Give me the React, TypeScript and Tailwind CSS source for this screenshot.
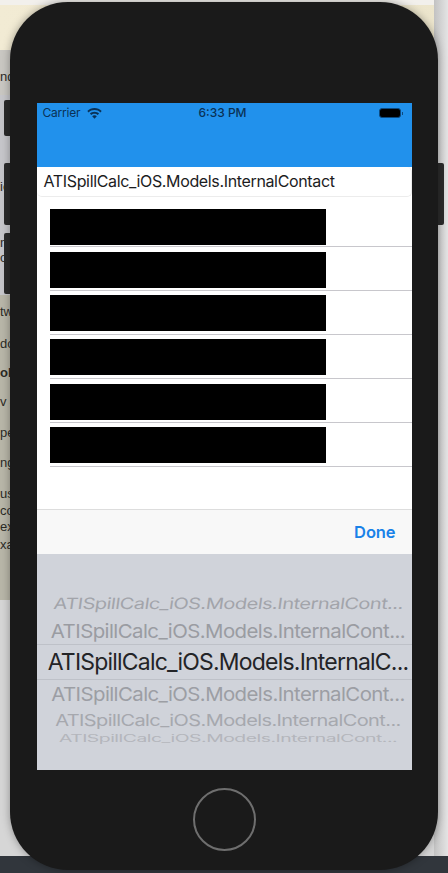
import React from 'react'

const rowLabel = 'ATISpillCalc_iOS.Models.InternalContact'
const wheelLabel = 'ATISpillCalc_iOS.Models.InternalCont...'

const contactRows = ['pt-[6px]', 'pt-[5px]', 'pt-[4px]', 'pt-[4px]', 'pt-[5px]', 'pt-[4px]']

const BackdropText = () => {
  return (
    <div className="w-[20px] overflow-hidden whitespace-nowrap text-[13px] leading-4 text-[#2c2b26] font-['Liberation_Sans',sans-serif]">
      <div className="h-[69px]"></div>
      <div className="h-[110px]">nd</div>
      <div className="h-[56px]">ic</div>
      <div className="h-[15px]">n</div>
      <div className="h-[54px]">oc</div>
      <div className="h-[32px]">tw</div>
      <div className="h-[29px]">do</div>
      <div className="h-[29px] font-bold">olc</div>
      <div className="h-[31px]">v 4</div>
      <div className="h-[30px]">pe</div>
      <div className="h-[31px]">ng</div>
      <div className="h-[17px]">us</div>
      <div className="h-[16px]">co</div>
      <div className="h-[18px]">ex</div>
      <div className="h-[16px]">xa</div>
    </div>
  )
}

const WifiIcon = () => {
  return (
    <svg width="15" height="11" viewBox="0 0 15 11" className="text-[#0a3156]">
      <path d="M7.5 0C4.7 0 2.2 1.1.3 2.9l1.4 1.5C3.2 2.9 5.2 2.1 7.5 2.1s4.3.8 5.8 2.3l1.4-1.5C12.8 1.1 10.3 0 7.5 0z" fill="currentColor" />
      <path d="M7.5 3.7c-1.8 0-3.4.7-4.6 1.9l1.4 1.5c.8-.8 2-1.3 3.2-1.3s2.4.5 3.2 1.3l1.4-1.5C10.9 4.4 9.3 3.7 7.5 3.7z" fill="currentColor" />
      <path d="M7.5 7.3c-.9 0-1.7.4-2.3 1l2.3 2.5 2.3-2.5c-.6-.6-1.4-1-2.3-1z" fill="currentColor" />
    </svg>
  )
}

const SideButton = ({ className }: { className: string }) => {
  return <div className={`absolute w-[8px] rounded-[2px] bg-[#2b2b2b] ${className}`}></div>
}

const Screen = () => {
  return (
    <div className="flex h-[667px] w-[375px] flex-col bg-white font-['Inter',sans-serif]">
      <div className="h-[64px] bg-[#2191ec]">
        <div className="flex h-[20px] items-center justify-between pl-[6px] pr-[1px] text-[12px] text-[#0a3156]">
          <div className="flex w-[120px] items-center gap-[7px] tracking-[-0.2px]">
            <span>Carrier</span>
            <WifiIcon />
          </div>
          <span className="font-medium">6:33 PM</span>
          <div className="mr-[8px] flex w-[120px] items-center justify-end gap-[1px]">
            <div className="h-[10px] w-[22px] rounded-[3px] border border-[#0d4a80] bg-black"></div>
            <div className="h-[3px] w-[1px] bg-[#0d4a80]"></div>
          </div>
        </div>
      </div>

      <div className="flex h-[30px] items-center rounded-[5px] border-b border-r border-[#ececec] pb-[1px] pl-[7px] text-[16px] tracking-[-0.35px] text-[#1c1c1e]">
        {rowLabel}
      </div>

      <div className="ml-[13px] mt-[6px] flex flex-col">
        {contactRows.map((pad, i) => (
          <div key={i} className={`h-[44px] border-b border-[#c8c7cc] ${pad}`}>
            <div className="h-[36px] w-[276px] bg-black"></div>
          </div>
        ))}
      </div>

      <div className="mt-[42px] flex h-[45px] items-center justify-end border-t border-[#dddddd] bg-[#f8f8f8] pr-[16px] text-[16.5px] font-semibold tracking-[-0.1px] text-[#1a82e8]">
        Done
      </div>

      <div className="flex h-[216px] flex-col overflow-hidden bg-[#d0d3da] pt-[36px] whitespace-nowrap">
        <div className="flex h-[28px] items-center justify-center pl-[8px] text-[20px] tracking-[-0.5px] text-[#a2a4aa] scale-y-[0.78] -skew-x-6">{wheelLabel}</div>
        <div className="flex h-[26px] items-center justify-center pl-[8px] text-[20.4px] tracking-[-0.56px] text-[#9a9ca2] scale-y-[0.93]">{wheelLabel}</div>
        <div className="flex h-[36px] items-center justify-center border-y border-[#bec1c8] pl-[8px] text-[23px] tracking-[-0.8px] text-[#232427]">ATISpillCalc_iOS.Models.InternalC...</div>
        <div className="flex h-[28px] items-center justify-center pl-[8px] text-[20.4px] tracking-[-0.58px] text-[#9c9ea4] scale-y-[0.93]">{wheelLabel}</div>
        <div className="flex h-[26px] items-center justify-center pl-[8px] text-[20px] tracking-[-0.6px] text-[#a6a8ae] scale-y-[0.78]">{wheelLabel}</div>
        <div className="flex h-[10px] items-center justify-center pl-[8px] text-[19.4px] tracking-[-0.5px] text-[#b4b6bc] scale-y-[0.5]">{wheelLabel}</div>
      </div>
    </div>
  )
}

const App = () => {
  return (
    <div className="relative h-[873px] w-[448px] overflow-hidden bg-[#d9d9d9]">
      {/* desktop behind the simulator */}
      <div className="flex h-[856px] flex-col">
        <div className="h-[5px] bg-[#f2f0ec]"></div>
        <div className="h-[45px] bg-gradient-to-r from-[#f2ebd4] to-[#ece5cc]"></div>
        <div className="h-[45px] bg-[#c9c7c2]"></div>
        <div className="h-[200px] bg-[#c6c6ca]"></div>
        <div className="h-[305px] bg-[#b8b6a8]"></div>
        <div className="flex-1 bg-[#d6d6d6]"></div>
      </div>
      <div className="h-[17px] bg-[#31363c]"></div>

      <div className="absolute left-0 top-0">
        <BackdropText />
      </div>
      <div className="absolute right-0 top-0 h-[856px] w-[14px] bg-gradient-to-r from-[#c2c2c2] to-[#e4e4e4]"></div>

      {/* device frame */}
      <SideButton className="left-[4px] top-[100px] h-[36px]" />
      <SideButton className="left-[4px] top-[163px] h-[62px]" />
      <SideButton className="left-[4px] top-[233px] h-[61px]" />
      <SideButton className="left-[436px] top-[163px] h-[62px]" />

      <div className="absolute left-[10px] top-[2px] flex h-[868px] w-[428px] flex-col items-center rounded-[58px] bg-[#1a1a1a] pt-[101px] shadow-[0_0_8px_rgba(0,0,0,0.35)]">
        <Screen />
        <div className="mt-[18px] h-[63px] w-[63px] rounded-full border-2 border-[#6e6e6e]"></div>
      </div>
    </div>
  )
}

export default App
